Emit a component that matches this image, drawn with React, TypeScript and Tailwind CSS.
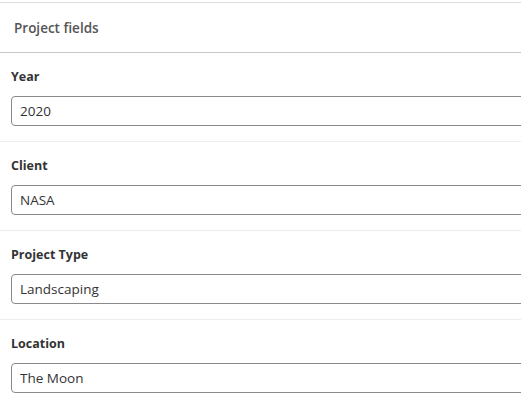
import React from "react";

const FIELDS: { label: string; value: string }[] = [
  { label: "Year", value: "2020" },
  { label: "Client", value: "NASA" },
  { label: "Project Type", value: "Landscaping" },
  { label: "Location", value: "The Moon" },
];

export default function App() {
  return (
    <div
      className="w-[521px] h-[405px] overflow-hidden bg-white pt-[2px]"
      style={{ fontFamily: '"Open Sans", "Noto Sans", sans-serif' }}
    >
      <div className="border-t border-[#dedede]">
        <div className="flex h-[50px] items-center border-b border-[#c6c6c6] pl-[14px] pt-[2px] text-[13.5px] font-semibold text-[#555]">
          Project fields
        </div>
        {FIELDS.map((f, i) => (
          <div
            key={f.label}
            className={`pl-[11px] pt-[16px] pb-[15px] ${
              i < FIELDS.length - 1 ? "border-b border-[#ececec]" : ""
            }`}
          >
            <div className="h-[16px] text-[12.5px] font-bold leading-[16px] text-[#333]">
              {f.label}
            </div>
            <input
              readOnly
              value={f.value}
              className="mt-[11px] block h-[30px] w-[540px] rounded-[4px] border border-[#8a8a8a] pl-[8px] text-[13.5px] text-[#333] outline-none"
              style={{ fontFamily: '"Open Sans", "Noto Sans", sans-serif' }}
            />
          </div>
        ))}
      </div>
    </div>
  );
}
